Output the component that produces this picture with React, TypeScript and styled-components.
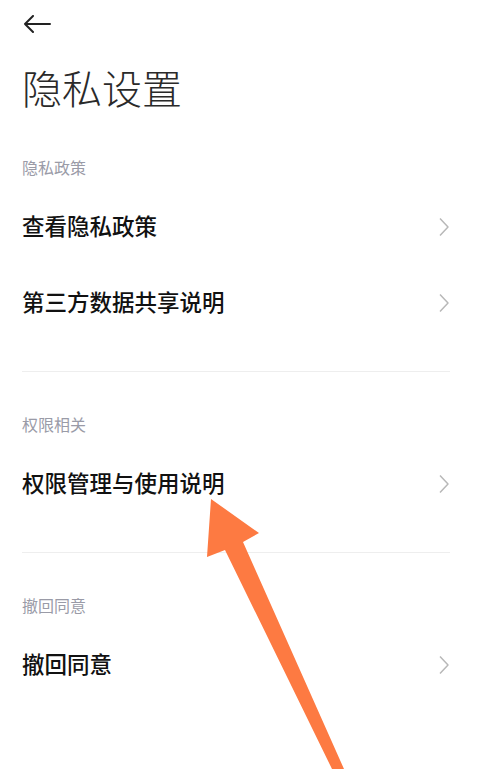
import styled, { createGlobalStyle } from 'styled-components';

const GlobalStyle = createGlobalStyle`
  html, body {
    margin: 0;
    padding: 0;
    background: #ffffff;
  }
  * {
    box-sizing: border-box;
  }
`;

const Page = styled.div`
  position: relative;
  width: 477px;
  height: 769px;
  overflow: hidden;
  background: #ffffff;
  font-family: 'Noto Sans CJK SC', 'Noto Sans', sans-serif;
  padding: 0 27px 0 22px;
`;

const TopBar = styled.div`
  height: 48px;
  display: flex;
  align-items: center;
  padding-left: 1px;
`;

const BackButton = styled.button`
  border: none;
  background: none;
  padding: 0;
  width: 30px;
  height: 20px;
  display: flex;
  align-items: center;
`;

const Title = styled.h1`
  margin: 13px 0 0;
  height: 52px;
  line-height: 52px;
  font-size: 40px;
  font-weight: 300;
  color: #2a2a2a;
`;

const Group = styled.section<{ $first?: boolean }>`
  padding-top: ${(p) => (p.$first ? '44px' : '42px')};
  padding-bottom: 30px;
`;

const Divider = styled.div`
  height: 1px;
  background: #eeeeee;
`;

const GroupLabel = styled.div`
  height: 20px;
  line-height: 20px;
  font-size: 16px;
  color: #9a9ba7;
  margin-bottom: 12px;
`;

const Row = styled.div`
  height: 76px;
  display: flex;
  align-items: center;
  justify-content: space-between;
`;

const RowText = styled.span`
  font-size: 22.5px;
  font-weight: 500;
  color: #111111;
  line-height: 30px;
  margin-bottom: 4px;
`;

const Chevron = () => (
  <svg width="12" height="20" viewBox="0 0 12 20" fill="none">
    <path d="M2 1.5 L10 10 L2 18.5" stroke="#b8b8b8" strokeWidth="1.5" strokeLinejoin="round" />
  </svg>
);

const Pointer = styled.svg`
  position: absolute;
  left: 0;
  top: 0;
  pointer-events: none;
`;

const groups = [
  { label: '隐私政策', items: ['查看隐私政策', '第三方数据共享说明'] },
  { label: '权限相关', items: ['权限管理与使用说明'] },
  { label: '撤回同意', items: ['撤回同意'] },
];

export default function App() {
  return (
    <>
      <GlobalStyle />
      <Page>
        <TopBar>
          <BackButton aria-label="返回">
            <svg width="28" height="18" viewBox="0 0 28 18" fill="none">
              <path d="M27 9 H2 M10 1 L2 9 L10 17" stroke="#222" strokeWidth="2" strokeLinecap="round" strokeLinejoin="round" />
            </svg>
          </BackButton>
        </TopBar>
        <Title>隐私设置</Title>
        {groups.map((g, gi) => (
          <div key={g.label}>
            {gi > 0 && <Divider />}
            <Group $first={gi === 0}>
              <GroupLabel>{g.label}</GroupLabel>
              {g.items.map((item) => (
                <Row key={item}>
                  <RowText>{item}</RowText>
                  <Chevron />
                </Row>
              ))}
            </Group>
          </div>
        ))}
        {/* 橙色指示箭头 */}
        <Pointer width="477" height="769" viewBox="0 0 477 769">
          <polygon points="211,499 259,533 243,542 344,769 332,769 225,550 207,557" fill="#fd7a42" />
        </Pointer>
      </Page>
    </>
  );
}
